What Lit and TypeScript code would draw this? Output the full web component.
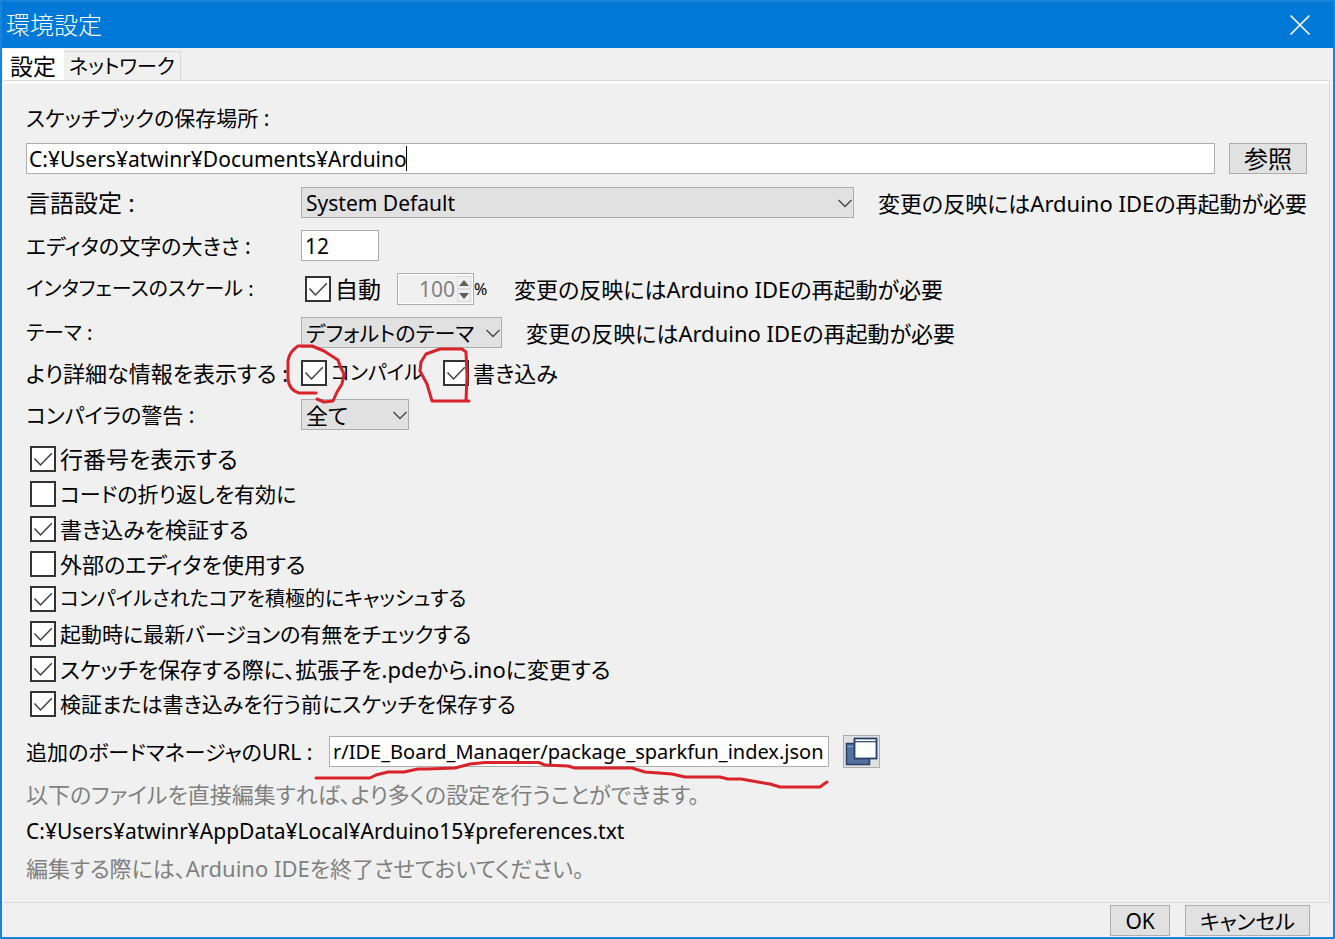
import { LitElement, html, css } from "lit";
import { customElement, property, query } from "lit/decorators.js";

@customElement("check-item")
class CheckItem extends LitElement {
  @property() label = "";
  @property() size = "m";
  @property({ type: Boolean }) checked = false;

  static styles = css`
    :host { display: block; }
    .item { display: flex; align-items: center; gap: 4px; height: 26px; white-space: nowrap; line-height: 26px; }
    .box { display: grid; flex: none; width: 26px; height: 26px; }
    .box > * { grid-area: 1 / 1; }
    input { appearance: none; box-sizing: border-box; margin: 0; width: 26px; height: 26px; background: #fff; border: 2px solid #333; border-radius: 0; }
    svg { width: 26px; height: 26px; pointer-events: none; fill: none; stroke: #404040; stroke-width: 1.5; visibility: hidden; }
    input:checked + svg { visibility: visible; }
    .s { font-size: 20px; }
    .m { font-size: 21px; }
    .l { font-size: 22px; }
    .xl { font-size: 23px; }
  `;

  render() {
    return html`
      <label class="item ${this.size}">
        <span class="box">
          <input type="checkbox" .checked=${this.checked} />
          <svg viewBox="0 0 26 26" aria-hidden="true"><path d="M4.5 12.5 L10.5 19 L21.8 7.2" /></svg>
        </span>
        <span>${this.label}</span>
      </label>`;
  }
}

@customElement("drop-down")
class DropDown extends LitElement {
  @property() value = "";
  @property() name = "";

  static styles = css`
    :host { display: grid; height: 31px; }
    .select, .arrow { grid-area: 1 / 1; }
    .select { appearance: none; box-sizing: border-box; width: 100%; height: 31px; margin: 0; padding: 0 24px 0 4px; border: 1px solid #adadad; border-radius: 0; background: #e1e1e1; color: #000; font: inherit; font-feature-settings: inherit; line-height: 28px; }
    .arrow { justify-self: end; align-self: center; width: 16px; height: 10px; margin-right: 1px; pointer-events: none; fill: none; stroke: #444; stroke-width: 1.3; }
  `;

  render() {
    return html`
      <select class="select" aria-label=${this.name}><option>${this.value}</option></select>
      <svg class="arrow" viewBox="0 0 16 10" aria-hidden="true"><path d="M1.5 2 L8 8.5 L14.5 2" /></svg>`;
  }
}

const OPTIONS: [string, boolean, string][] = [
  ["行番号を表示する", true, "xl"],
  ["コードの折り返しを有効に", false, "m"],
  ["書き込みを検証する", true, "l"],
  ["外部のエディタを使用する", false, "l"],
  ["コンパイルされたコアを積極的にキャッシュする", true, "s"],
  ["起動時に最新バージョンの有無をチェックする", true, "m"],
  ["スケッチを保存する際に、拡張子を.pdeから.inoに変更する", true, "l"],
  ["検証または書き込みを行う前にスケッチを保存する", true, "m"],
];

@customElement("app-root")
class AppRoot extends LitElement {
  @query(".url") url!: HTMLInputElement;

  static styles = css`
    :host {
      display: block;
      font-family: "Noto Sans", "Noto Sans CJK JP", sans-serif;
      font-feature-settings: "palt";
      font-size: 21px;
      color: #000;
    }
    .window { position: relative; box-sizing: border-box; min-height: 100vh; display: flex; flex-direction: column; border: 2px solid #1883d7; background: #f0f0f0; }
    .titlebar { display: flex; align-items: center; justify-content: space-between; height: 46px; padding: 0 22px 0 4px; background: #0078d7; color: #fff; }
    .title { margin: 0; font-size: 24px; font-weight: 300; line-height: 44px; }
    .close { display: flex; padding: 0; border: 0; background: none; }
    .close svg { width: 22px; height: 22px; fill: none; stroke: #fff; stroke-width: 1.7; }
    .tabs { display: flex; align-items: flex-end; height: 33px; padding-left: 1px; }
    .tab { box-sizing: border-box; margin: 0; padding: 0 5px; border: 1px solid #d9d9d9; border-bottom: 0; border-left: 0; background: #f0f0f0; color: #000; font: inherit; font-feature-settings: inherit; white-space: nowrap; height: 30px; line-height: 26px; }
    .active { height: 32px; font-size: 23px; line-height: 28px; padding: 0 7px; background: #fff; border-color: #fff; }
    .panel { flex: 1; display: flex; flex-direction: column; margin: 0 3px 0 1px; padding: 18px 22px 12px; border: 1px solid #d9d9d9; border-left-color: #fff; border-top: 3px solid #fff; box-shadow: 0 -1px 0 #d9d9d9; }
    .row { display: flex; align-items: center; min-height: 31px; line-height: 26px; white-space: nowrap; margin-bottom: 12px; }
    .caption { line-height: 32px; margin-bottom: 9px; }
    .path { gap: 14px; margin-bottom: 13px; }
    .name { flex: none; width: 275px; height: 26px; }
    .fill { flex: 1; }
    .note { margin-left: 24px; height: 26px; }
    .field { box-sizing: border-box; height: 31px; margin: 0; padding: 0 3px; border: 1px solid #adadad; border-radius: 0; background: #fff; color: #000; font: inherit; font-feature-settings: inherit; }
    .text { position: relative; display: flex; flex: 1; }
    .text .field { flex: 1; min-width: 0; padding: 0 2px; }
    .caret { position: absolute; left: 380px; top: 3px; width: 1px; height: 25px; background: #000; }
    .button { box-sizing: border-box; height: 31px; margin: 0; padding: 0 14px; border: 1px solid #adadad; border-radius: 0; background: #e1e1e1; color: #000; font: inherit; font-feature-settings: inherit; line-height: 28px; }
    .points { width: 78px; }
    .scale { min-height: 32px; }
    .auto { margin-left: 4px; width: 92px; }
    .spinner { box-sizing: border-box; display: flex; width: 77px; height: 32px; padding: 2px; border: 1px solid #adadad; background: #f0f0f0; box-shadow: inset 0 0 0 1px #fff; }
    .amount { appearance: textfield; box-sizing: border-box; width: 57px; min-width: 0; height: 26px; padding: 0; padding-right: 2px; border: 0; background: none; color: #808080; text-align: right; font: inherit; }
    .steps { display: flex; flex-direction: column; width: 14px; }
    .step { flex: 1; display: grid; place-items: center; padding: 0; border: 1px solid #dcdcdc; background: #f0f0f0; }
    .step svg { width: 10px; height: 6px; fill: #606060; }
    .percent { width: 16px; font-size: 16px; }
    .theme { width: 201px; }
    .verbose { min-height: 26px; margin-bottom: 13px; }
    .compile { width: 142px; }
    .warnings { width: 108px; }
    .options { display: flex; flex-direction: column; gap: 9px; padding: 4px; margin-bottom: 14px; }
    .boards { min-height: 33px; margin-bottom: 8px; }
    .boards .name { width: 303px; }
    .url { width: 500px; }
    .expand { box-sizing: border-box; display: grid; place-items: center; width: 37px; height: 33px; margin: 0 0 0 14px; padding: 0; border: 1px solid #adadad; background: #e1e1e1; }
    .expand svg { width: 33px; height: 29px; }
    .info { margin: 0; height: 37px; line-height: 37px; }
    .muted { color: #808080; }
    .actions { display: flex; justify-content: flex-end; gap: 15px; padding: 2px 23px 1px; }
    .small { font-size: 20px; }
    .large { font-size: 22px; }
    .kanji { font-size: 24px; }
    .ink { position: absolute; left: 283px; top: 338px; width: 560px; height: 460px; pointer-events: none; fill: none; stroke: #d9232a; stroke-width: 3; stroke-linecap: round; stroke-linejoin: round; }
  `;

  async firstUpdated() {
    await document.fonts.ready;
    this.url.scrollLeft = this.url.scrollWidth;
  }

  private note() {
    return html`<span class="note large">変更の反映にはArduino IDEの再起動が必要</span>`;
  }

  render() {
    return html`
      <main class="window">
        <header class="titlebar">
          <h1 class="title">環境設定</h1>
          <button class="close" aria-label="閉じる">
            <svg viewBox="0 0 22 22"><path d="M1.5 1.5 L20.5 20.5 M20.5 1.5 L1.5 20.5" /></svg>
          </button>
        </header>
        <nav class="tabs" role="tablist">
          <button class="tab active" role="tab" aria-selected="true">設定</button>
          <button class="tab small" role="tab" aria-selected="false">ネットワーク</button>
        </nav>
        <section class="panel">
          <label class="caption" for="path">スケッチブックの保存場所 :</label>
          <div class="row path">
            <div class="text">
              <input id="path" class="field" type="text" .value=${"C:¥Users¥atwinr¥Documents¥Arduino"} />
              <span class="caret"></span>
            </div>
            <button class="button kanji">参照</button>
          </div>
          <div class="row">
            <span class="name kanji">言語設定 :</span>
            <drop-down class="fill" name="言語設定" value="System Default"></drop-down>
            ${this.note()}
          </div>
          <div class="row">
            <label class="name" for="points">エディタの文字の大きさ :</label>
            <input id="points" class="field points" type="text" .value=${"12"} />
          </div>
          <div class="row scale">
            <span class="name small">インタフェースのスケール :</span>
            <check-item class="auto" size="xl" label="自動" checked></check-item>
            <span class="spinner">
              <input class="amount" type="text" aria-label="スケール" disabled .value=${"100"} />
              <span class="steps">
                <button class="step" disabled aria-label="増やす"><svg viewBox="0 0 10 6"><path d="M0 6 L5 0 L10 6 Z" /></svg></button>
                <button class="step" disabled aria-label="減らす"><svg viewBox="0 0 10 6"><path d="M0 0 L5 6 L10 0 Z" /></svg></button>
              </span>
            </span>
            <span class="percent">%</span>
            ${this.note()}
          </div>
          <div class="row">
            <span class="name small">テーマ :</span>
            <drop-down class="theme" name="テーマ" value="デフォルトのテーマ"></drop-down>
            ${this.note()}
          </div>
          <div class="row verbose">
            <span class="name large">より詳細な情報を表示する :</span>
            <check-item class="compile" size="s" label="コンパイル" checked></check-item>
            <check-item size="l" label="書き込み" checked></check-item>
          </div>
          <div class="row">
            <span class="name">コンパイラの警告 :</span>
            <drop-down class="warnings large" name="コンパイラの警告" value="全て"></drop-down>
          </div>
          <div class="options">
            ${OPTIONS.map(([label, on, size]) => html`<check-item size=${size} label=${label} ?checked=${on}></check-item>`)}
          </div>
          <div class="row boards">
            <label class="name" for="url">追加のボードマネージャのURL :</label>
            <input id="url" class="field url small" type="text" .value=${"r/IDE_Board_Manager/package_sparkfun_index.json"} />
            <button class="expand" aria-label="URLの一覧">
              <svg viewBox="0 0 33 29">
                <rect x="1.5" y="6.5" width="23" height="21" fill="#54719f" stroke="#26406b" stroke-width="1.5" />
                <path d="M2 9.5 H24" stroke="#8fa6c8" />
                <rect x="9.5" y="1.5" width="22" height="20" fill="#fff" stroke="#26406b" stroke-width="1.8" />
                <path d="M10 4.7 H31" stroke="#26406b" stroke-width="1.2" />
              </svg>
            </button>
          </div>
          <p class="info large muted">以下のファイルを直接編集すれば、より多くの設定を行うことができます。</p>
          <p class="info">C:¥Users¥atwinr¥AppData¥Local¥Arduino15¥preferences.txt</p>
          <p class="info large muted">編集する際には、Arduino IDEを終了させておいてください。</p>
        </section>
        <footer class="actions">
          <button class="button">OK</button>
          <button class="button">キャンセル</button>
        </footer>
        <svg class="ink" viewBox="285 340 560 460" aria-hidden="true">
          <path d="M316 393 H299 Q289 390 288 379 V361 Q289 352 298 346 H312 L324 351 L338 360 L340 366 L344 374 L342 384 L337 392 L333 401 L324 402 L317 399" />
          <path d="M466 401 L467 376 L466 352 L462 349 H440 L426 354 L421 362 L420 371 L427 384 L432 401 H469" />
          <path d="M316 778 H370 L376 775 L388 772 H404 L418 769 H427 L455 768 L470 764 L485 762.5 H539 L545 765 L568 766 L575 768 H632 L645 772 L672 774 L685 777 H720 L728 779 L741 779 L758 782 L770 784 L780 787 H820 L824 784 L827 782" />
        </svg>
      </main>`;
  }
}
